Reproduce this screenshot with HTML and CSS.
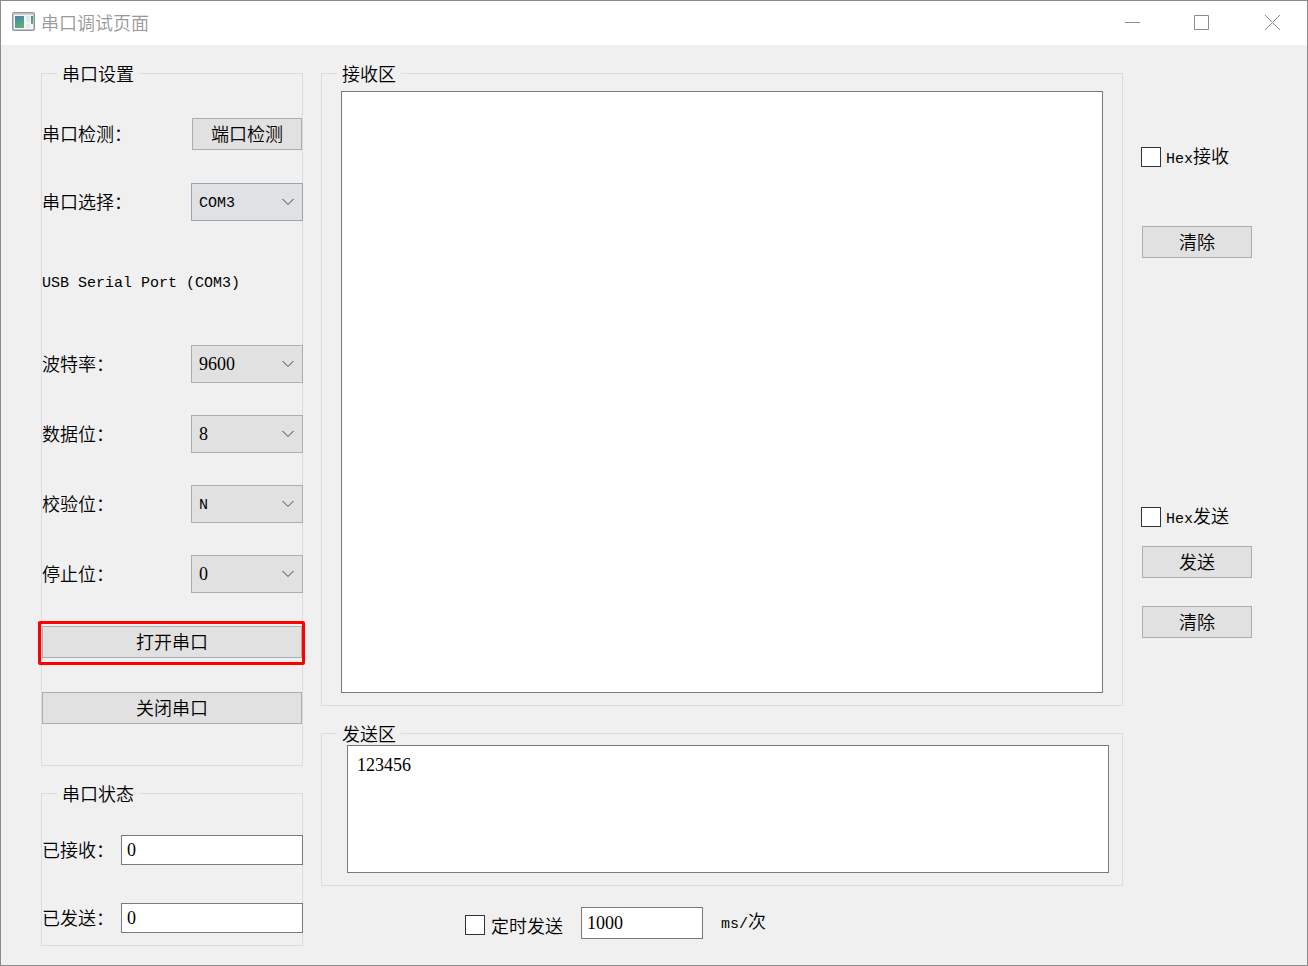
FILE: index.html
```html
<!DOCTYPE html>
<html lang="zh-CN">
<head>
<meta charset="utf-8">
<title>串口调试页面</title>
<link rel="stylesheet" href="styles.css">
</head>
<body>
<div class="window">
  <header class="titlebar">
    <svg class="app-icon" width="24" height="20" viewBox="0 0 24 20" aria-hidden="true">
      <defs>
        <linearGradient id="pane" x1="0" y1="0" x2="0.4" y2="1">
          <stop offset="0" stop-color="#4a7fae"/>
          <stop offset="1" stop-color="#58b077"/>
        </linearGradient>
      </defs>
      <rect x="0.75" y="0.75" width="21.500" height="17.500" rx="1.500" fill="#f4f5f6" stroke="#92979b" stroke-width="1.500"/>
      <path d="M1.500 2.500h20" stroke="#c9ced2"/>
      <rect x="3" y="4" width="9" height="12" fill="url(#pane)"/>
      <rect x="14" y="4" width="4" height="6" fill="#e4e6e8"/>
      <rect x="14" y="12" width="4" height="4" fill="#e9ebec"/>
      <rect x="19" y="4" width="2" height="8" fill="url(#pane)"/>
    </svg>
    <h1 class="title">串口调试页面</h1>
    <div class="controls">
      <button class="control" type="button" aria-label="最小化"><svg width="16" height="16" viewBox="0 0 16 16"><path d="M1 8.500h15"/></svg></button>
      <button class="control" type="button" aria-label="最大化"><svg width="16" height="16" viewBox="0 0 16 16"><path d="M.5 1.500h14v14H.5z"/></svg></button>
      <button class="control" type="button" aria-label="关闭"><svg width="16" height="16" viewBox="0 0 16 16"><path d="M1 1l15 15M16 1l-15 15"/></svg></button>
    </div>
  </header>

  <main class="content">
    <div class="column">
      <fieldset class="group settings">
        <legend>串口设置</legend>
        <div class="rows detect">
          <div class="row">
            <label for="detect">串口检测：</label>
            <button class="button" id="detect" type="button">端口检测</button>
          </div>
          <div class="row">
            <label for="port">串口选择：</label>
            <div class="combo active"><select class="latin" id="port"><option>COM3</option></select><svg width="12" height="8" viewBox="0 0 12 8"><path d="M.5 1l5.500 5.500L11.500 1"/></svg></div>
          </div>
        </div>
        <p class="port-name latin">USB Serial Port (COM3)</p>
        <div class="rows params">
          <div class="row">
            <label for="baud">波特率：</label>
            <div class="combo"><select class="digits" id="baud"><option>9600</option></select><svg width="12" height="8" viewBox="0 0 12 8"><path d="M.5 1l5.500 5.500L11.500 1"/></svg></div>
          </div>
          <div class="row">
            <label for="data">数据位：</label>
            <div class="combo"><select class="digits" id="data"><option>8</option></select><svg width="12" height="8" viewBox="0 0 12 8"><path d="M.5 1l5.500 5.500L11.500 1"/></svg></div>
          </div>
          <div class="row">
            <label for="parity">校验位：</label>
            <div class="combo"><select class="latin" id="parity"><option>N</option></select><svg width="12" height="8" viewBox="0 0 12 8"><path d="M.5 1l5.500 5.500L11.500 1"/></svg></div>
          </div>
          <div class="row">
            <label for="stop">停止位：</label>
            <div class="combo"><select class="digits" id="stop"><option>0</option></select><svg width="12" height="8" viewBox="0 0 12 8"><path d="M.5 1l5.500 5.500L11.500 1"/></svg></div>
          </div>
        </div>
        <div class="actions">
          <div class="marked"><button class="button wide" type="button">打开串口</button></div>
          <button class="button wide" type="button">关闭串口</button>
        </div>
      </fieldset>

      <fieldset class="group status">
        <legend>串口状态</legend>
        <div class="row">
          <label for="received">已接收：</label>
          <input class="field digits" id="received" type="text" value="0">
        </div>
        <div class="row">
          <label for="sent">已发送：</label>
          <input class="field digits" id="sent" type="text" value="0">
        </div>
      </fieldset>
    </div>

    <div class="column">
      <fieldset class="group receive">
        <legend>接收区</legend>
        <div class="inner"><textarea class="area digits" aria-label="接收区"></textarea></div>
      </fieldset>
      <fieldset class="group send">
        <legend>发送区</legend>
        <div class="inner"><textarea class="area digits" aria-label="发送区">123456</textarea></div>
      </fieldset>
      <div class="timer">
        <label class="check"><input type="checkbox">定时发送</label>
        <input class="field interval digits" id="interval" type="text" value="1000">
        <label class="unit" for="interval"><span class="latin">ms/</span>次</label>
      </div>
    </div>

    <div class="side">
      <label class="check"><input type="checkbox"><span><span class="latin">Hex</span>接收</span></label>
      <button class="button clear-received" type="button">清除</button>
      <label class="check hex-send"><input type="checkbox"><span><span class="latin">Hex</span>发送</span></label>
      <button class="button do-send" type="button">发送</button>
      <button class="button clear-sent" type="button">清除</button>
    </div>
  </main>
</div>
</body>
</html>
```

FILE: styles.css
```css
* {
  box-sizing: border-box;
}

body {
  margin: 0;
  background: #f0f0f0;
  color: #000;
  font: 350 18px/24px "Noto Sans CJK SC", sans-serif;
}

button,
input,
select,
textarea {
  margin: 0;
  color: inherit;
  font: inherit;
}

.latin {
  font-family: "Liberation Mono", "Noto Sans CJK SC", monospace;
  font-size: 15px;
}

.digits {
  font-family: "Liberation Serif", "Noto Sans CJK SC", serif;
  font-size: 18px;
}

.window {
  display: flex;
  flex-direction: column;
  min-height: 100vh;
  border: 1px solid #8c8c8c;
}

/* Title bar */
.titlebar {
  display: flex;
  align-items: center;
  height: 44px;
  padding: 0 0 2px 11px;
  background: #fff;
  color: #999;
}

.title {
  margin: 0 0 0 5px;
  font-size: 18px;
  font-weight: 350;
}

.controls {
  display: flex;
  margin-left: auto;
}

.control {
  display: grid;
  place-items: center;
  width: 70px;
  height: 42px;
  padding: 0;
  border: 0;
  background: none;
}

.control svg {
  fill: none;
  stroke: #8c8c8c;
}

/* Layout */
.content {
  display: grid;
  flex: 1;
  grid-template-columns: 262px minmax(0, 1fr) 111px;
  gap: 18px;
  padding: 16px 55px 19px 40px;
}

.column {
  display: flex;
  flex-direction: column;
  gap: 15px;
}

.group {
  min-width: 0;
  margin: 0;
  padding: 0;
  border: 1px solid #dcdcdc;
}

.group legend {
  margin-left: 15px;
  padding: 0 5px;
}

.row {
  display: flex;
  align-items: center;
  justify-content: space-between;
}

.row label {
  padding-bottom: 3px;
}

/* Controls */
.button {
  width: 110px;
  height: 32px;
  padding: 0 0 3px;
  border: 1px solid #adadad;
  background: #e1e1e1;
  line-height: 24px;
}

.wide {
  display: block;
  width: 100%;
}

.combo {
  position: relative;
  width: 112px;
  height: 38px;
  margin-right: -1px;
}

.combo select {
  width: 100%;
  height: 100%;
  padding: 0 24px 0 7px;
  border: 1px solid #adadad;
  border-radius: 0;
  background: #e1e1e1;
  appearance: none;
}

.combo select.latin {
  padding-top: 3px;
}

.combo.active select {
  border-color: #98a5b5;
  background: #dfe1e3;
}

.combo svg {
  position: absolute;
  top: 15px;
  right: 9px;
  fill: none;
  stroke: #444;
  pointer-events: none;
}

.field {
  width: 182px;
  height: 30px;
  margin-right: -1px;
  padding: 0 5px;
  border: 1px solid #7a7a7a;
  background: #fff;
}

.area {
  display: block;
  width: 100%;
  padding: 7px 9px;
  border: 1px solid #7a7a7a;
  background: #fff;
  resize: none;
}

.check {
  display: flex;
  align-items: center;
  gap: 5px;
}

.check input {
  width: 20px;
  height: 20px;
  border: 1px solid #333;
  background: #fff;
  appearance: none;
}

.check input:checked {
  box-shadow: inset 0 0 0 4px #fff;
  background: #333;
}

/* Port settings */
.settings {
  flex: 1;
}

.rows {
  display: flex;
  flex-direction: column;
}

.detect {
  gap: 33px;
  padding-top: 33px;
}

.port-name {
  margin: 51px 0 49px;
}

.params {
  gap: 32px;
}

.actions {
  display: flex;
  flex-direction: column;
  gap: 34px;
  padding: 33px 0 41px;
}

.marked {
  position: relative;
}

.marked::after {
  position: absolute;
  inset: -5px -3px -7px -4px;
  border: 3px solid #f00;
  border-radius: 2px;
  content: "";
  pointer-events: none;
}

.status {
  padding: 30px 0 12px;
}

.status .row + .row {
  margin-top: 38px;
}

/* Receive and send */
.receive {
  flex: 1;
}

.receive .inner {
  height: 100%;
  padding: 6px 19px 12px;
}

.receive .area {
  height: 100%;
}

.send .inner {
  padding: 0 13px 12px 25px;
}

.send .area {
  height: 128px;
}

.timer {
  display: flex;
  height: 32px;
  margin: 6px 0 7px;
  padding-left: 144px;
  line-height: 26px;
}

.timer .check {
  gap: 6px;
  align-self: flex-end;
  height: 28px;
}

.interval {
  width: 122px;
  height: 32px;
  margin: 0 18px;
}

/* Side actions */
.side {
  display: flex;
  flex-direction: column;
  padding-top: 84px;
}

.side .check {
  height: 24px;
}

.side .button {
  align-self: flex-end;
}

.clear-received {
  margin-top: 57px;
}

.hex-send {
  margin-top: 247px;
}

.do-send {
  margin-top: 17px;
}

.clear-sent {
  margin-top: 28px;
}
```
